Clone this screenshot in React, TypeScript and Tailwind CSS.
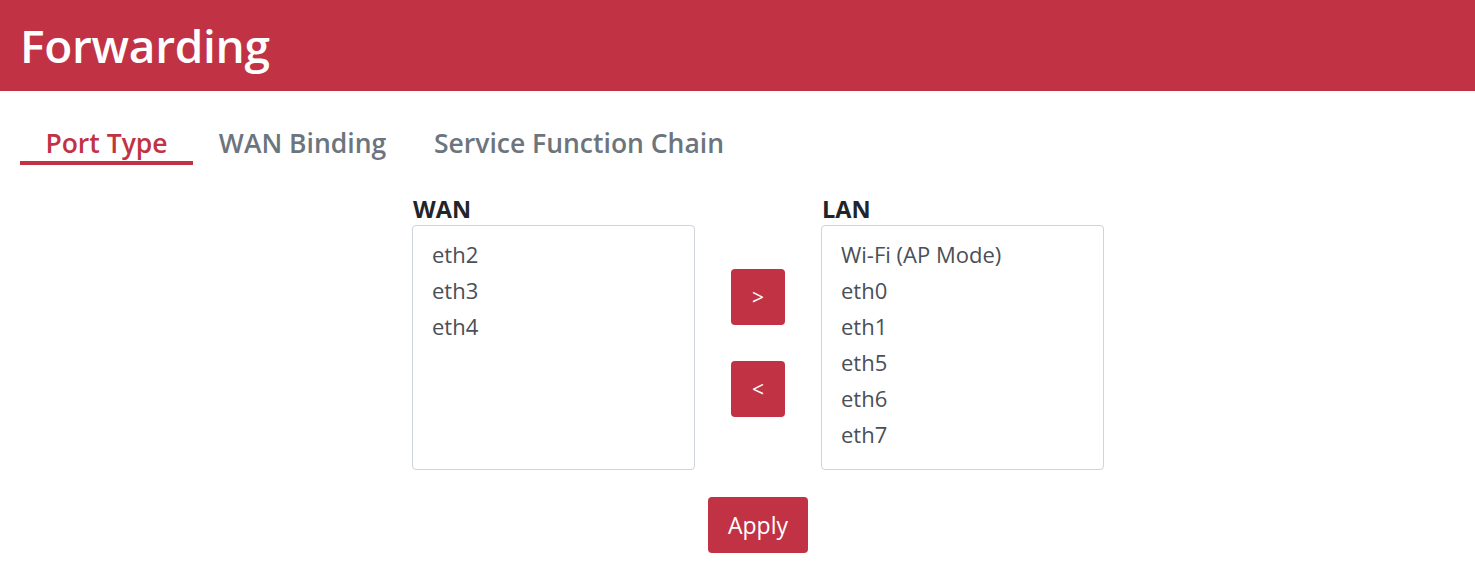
import React from "react";

const wan = ["eth2", "eth3", "eth4"];
const lan = ["Wi-Fi (AP Mode)", "eth0", "eth1", "eth5", "eth6", "eth7"];

function ListBox({ title, items }: { title: string; items: string[] }) {
  return (
    <div className="flex flex-col">
      <div className="text-[23.5px] font-bold leading-[28px] text-[#212529] pl-[1px] mb-[2px]">{title}</div>
      <div className="w-[283px] h-[245px] border border-[#ced4da] rounded-[4px] pt-[10px] pl-[19px]">
        {items.map((it) => (
          <div key={it} className="text-[22px] leading-[36px] text-[#495057]">
            {it}
          </div>
        ))}
      </div>
    </div>
  );
}

const tabs = [
  { t: "Port Type", a: true, w: "w-[173px]" },
  { t: "WAN Binding", a: false, w: "w-[219px]" },
  { t: "Service Function Chain", a: false, w: "w-[334px]" },
];

export default function App() {
  return (
    <div className="w-[1475px] h-[582px] bg-white overflow-hidden" style={{ fontFamily: '"Open Sans", "Noto Sans", sans-serif' }}>
      <div className="h-[91px] bg-[#c13344] flex items-center pl-[20px]">
        <h1 className="text-[46px] font-semibold text-white leading-none mt-[-2px] tracking-[-0.3px]">Forwarding</h1>
      </div>
      <div className="flex pl-[20px] pt-[34px]">
        {tabs.map((tab) => (
          <div
            key={tab.t}
            className={`${tab.w} h-[40px] text-center whitespace-nowrap text-[26.5px] font-semibold leading-[36px] ${
              tab.a ? "text-[#c13344] border-b-[4px] border-[#c13344]" : "text-[#6c757d]"
            }`}
          >
            {tab.t}
          </div>
        ))}
      </div>
      <div className="flex flex-col items-center pl-[41px] pt-[30px]">
        <div className="flex items-start">
          <ListBox title="WAN" items={wan} />
          <div className="flex flex-col gap-[36px] mx-[36px] mt-[74px]">
            <button className="w-[54px] h-[56px] rounded-[4px] bg-[#c13344] text-white text-[21px] leading-none">&gt;</button>
            <button className="w-[54px] h-[56px] rounded-[4px] bg-[#c13344] text-white text-[21px] leading-none">&lt;</button>
          </div>
          <ListBox title="LAN" items={lan} />
        </div>
        <button className="mt-[27px] w-[100px] h-[56px] rounded-[4px] bg-[#c13344] text-white text-[23px]">Apply</button>
      </div>
    </div>
  );
}
